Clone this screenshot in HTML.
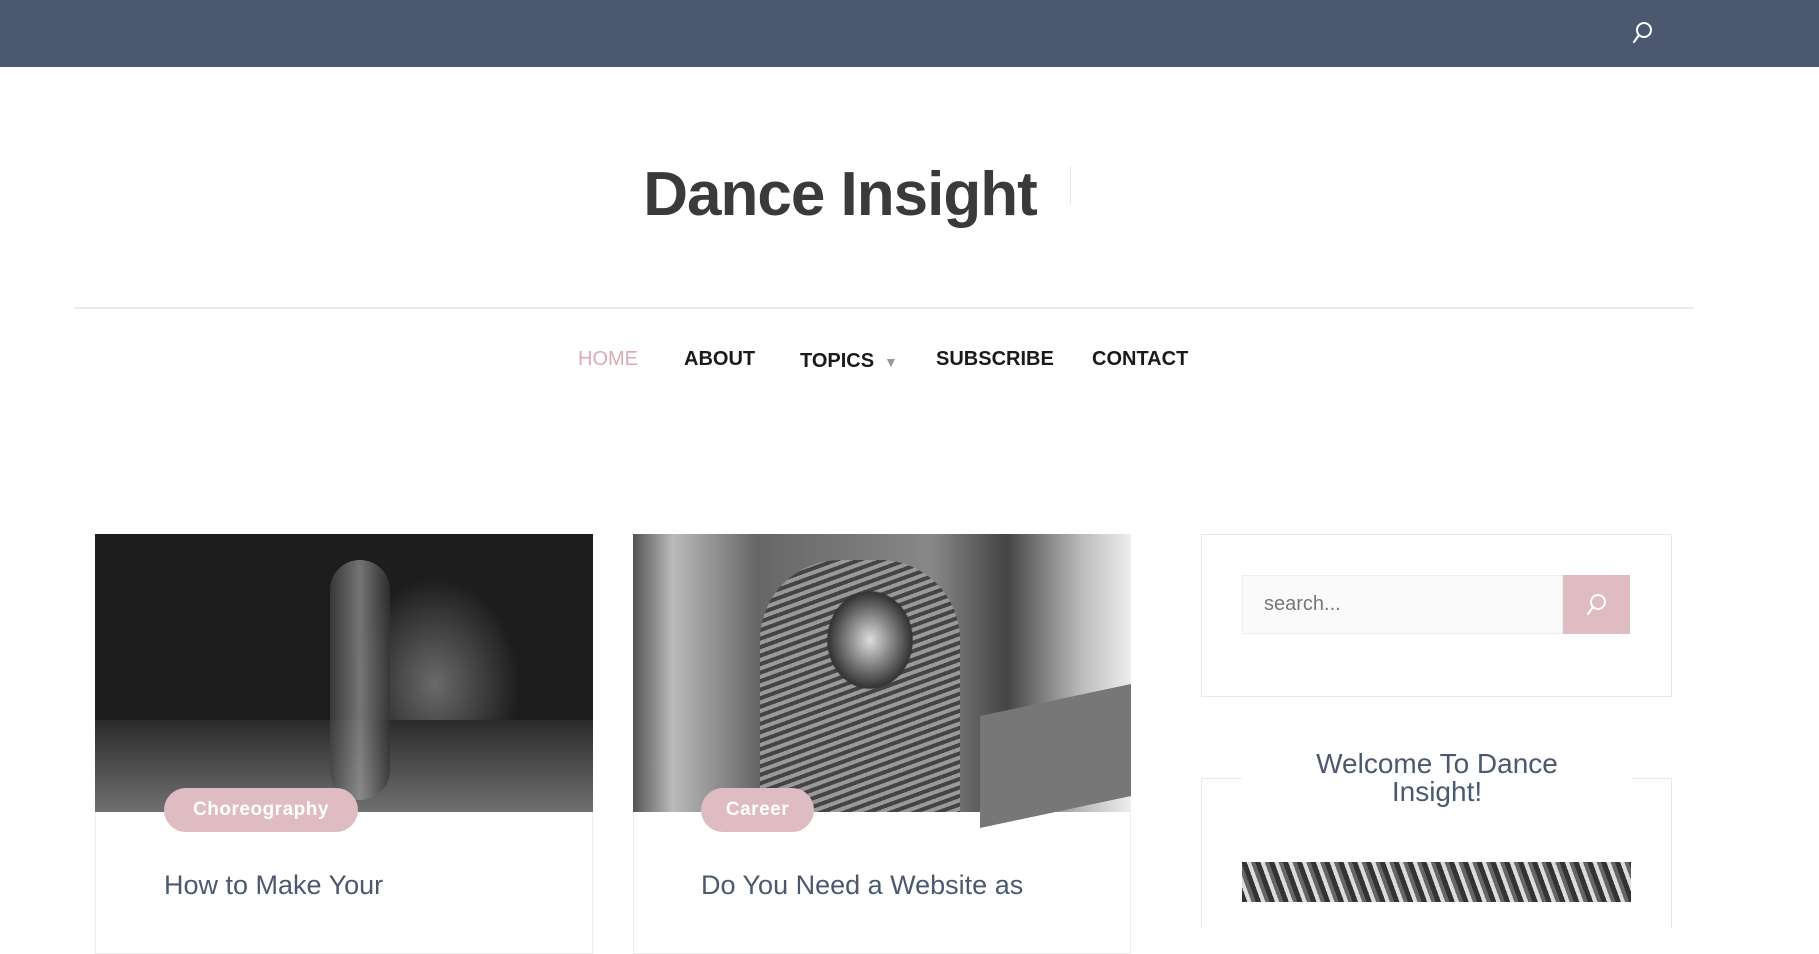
<!DOCTYPE html>
<html><head><meta charset="utf-8"><style>
*{margin:0;padding:0;box-sizing:border-box}
body{width:1819px;height:891px;overflow:hidden;background:#fff;font-family:"Liberation Sans",sans-serif;position:relative}
.top{position:absolute;left:0;top:0;width:1819px;height:67px;background:#4b5870}
.abs{position:absolute}
.nav a{position:absolute;top:348px;font-size:20px;font-weight:bold;color:#1a1a1a;text-decoration:none;letter-spacing:0px}
.badge{position:absolute;height:44px;border-radius:22px;background:#dfbbc2;color:#fff;font-size:19px;font-weight:bold;line-height:44px;text-align:center;letter-spacing:.5px}
.ptitle{position:absolute;top:870px;font-size:27px;color:#4b5870}
</style></head><body>
<div class="top">
<svg class="abs" style="left:1632px;top:21px" width="22" height="24" viewBox="0 0 22 24"><circle cx="12" cy="9" r="7" fill="none" stroke="#fff" stroke-width="2"/><line x1="7" y1="14" x2="2" y2="21" stroke="#fff" stroke-width="2.2" stroke-linecap="round"/></svg>
</div>
<div class="abs" style="left:560px;top:159px;width:560px;text-align:center;font-size:62px;font-weight:bold;color:#3a3a3a;letter-spacing:-1px">Dance Insight</div>
<div class="abs" style="left:1070px;top:166px;width:1px;height:38px;background:#e6e6e6"></div>
<div class="abs" style="left:74px;top:307px;width:1620px;height:2px;background:#ececec"></div>
<div class="nav">
<a style="left:578px;color:#dbaab5;font-weight:normal">HOME</a>
<a style="left:684px">ABOUT</a>
<a style="left:800px;top:350px">TOPICS</a>
<a style="left:884px;top:354px;font-size:14px;color:#999">▼</a>
<a style="left:936px">SUBSCRIBE</a>
<a style="left:1092px">CONTACT</a>
</div>
<!-- card 1 -->
<div class="abs" style="left:95px;top:534px;width:498px;height:420px;border:1px solid #eee"></div>
<div class="abs" style="left:95px;top:534px;width:498px;height:278px;background:radial-gradient(ellipse 120px 150px at 340px 150px,#6a6a6a,#1d1d1d 70%),#1a1a1a"></div>
<div class="abs" style="left:95px;top:720px;width:498px;height:92px;background:linear-gradient(#2a2a2a,#707070)"></div>
<div class="abs" style="left:330px;top:560px;width:60px;height:240px;background:linear-gradient(90deg,#444,#999,#333);border-radius:30px;opacity:.7"></div>
<div class="badge" style="left:164px;top:788px;width:194px">Choreography</div>
<div class="ptitle" style="left:164px">How to Make Your</div>
<!-- card 2 -->
<div class="abs" style="left:633px;top:534px;width:498px;height:420px;border:1px solid #eee"></div>
<div class="abs" style="left:633px;top:534px;width:498px;height:278px;background:linear-gradient(90deg,#555 0%,#bbb 8%,#666 25%,#888 60%,#444 75%,#bbb 90%,#eee 100%)"></div>
<div class="abs" style="left:760px;top:560px;width:200px;height:252px;background:radial-gradient(ellipse 70px 80px at 110px 80px,#ddd,#333 60%,transparent 62%),repeating-linear-gradient(160deg,#444 0 4px,#999 4px 8px);border-radius:80px 80px 0 0"></div>
<div class="abs" style="left:980px;top:700px;width:151px;height:112px;background:#777;transform:skewY(-12deg)"></div>
<div class="badge" style="left:701px;top:788px;width:113px">Career</div>
<div class="ptitle" style="left:701px">Do You Need a Website as</div>
<!-- sidebar -->
<div class="abs" style="left:1201px;top:534px;width:471px;height:163px;border:1px solid #e8e8e8"></div>
<div class="abs" style="left:1242px;top:575px;width:321px;height:59px;background:#fafafa;border:1px solid #eee"></div>
<div class="abs" style="left:1264px;top:593px;font-size:20px;color:#777">search...</div>
<div class="abs" style="left:1563px;top:575px;width:67px;height:59px;background:#dfbbc2"></div>
<svg class="abs" style="left:1586px;top:593px" width="22" height="24" viewBox="0 0 22 24"><circle cx="12" cy="9" r="7" fill="none" stroke="#fff" stroke-width="2"/><line x1="7" y1="14" x2="2" y2="21" stroke="#fff" stroke-width="2.2" stroke-linecap="round"/></svg>
<div class="abs" style="left:1201px;top:778px;width:471px;height:150px;border:1px solid #e8e8e8;border-bottom:none"></div>
<div class="abs" style="left:1242px;top:750px;width:390px;height:60px;background:#fff;text-align:center;font-size:28px;line-height:28px;color:#4b5870">Welcome To Dance<br>Insight!</div>
<div class="abs" style="left:1242px;top:862px;width:389px;height:40px;background:repeating-linear-gradient(70deg,#333 0 5px,#ddd 5px 9px,#666 9px 13px)"></div>
</body></html>
